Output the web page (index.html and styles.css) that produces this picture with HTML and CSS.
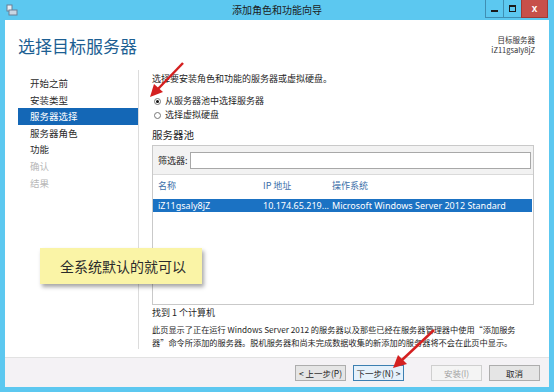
FILE: index.html
```html
<!DOCTYPE html>
<html lang="zh-CN">
<head>
    <meta charset="UTF-8">
    <title>添加角色和功能向导</title>
    <link rel="stylesheet" href="styles.css">
</head>
<body>
    <div class="window">
        <div class="titlebar">
            <svg class="app-icon" width="12" height="12" viewBox="0 0 12 12">
                <rect x="1" y="1" width="5" height="6" fill="#e8eef4" stroke="#6a7f95" stroke-width="1"/>
                <rect x="3" y="6" width="8" height="5" fill="#c9d6e3" stroke="#6a7f95" stroke-width="1"/>
            </svg>
            <span class="title">添加角色和功能向导</span>
            <div class="controls">
                <span class="ctl ctl-min"><i></i></span>
                <span class="ctl ctl-max"><i></i></span>
                <span class="ctl ctl-close">x</span>
            </div>
        </div>

        <div class="client">
            <div class="header">
                <h1>选择目标服务器</h1>
                <div class="target">
                    <div>目标服务器</div>
                    <div>iZ11gsaly8jZ</div>
                </div>
            </div>

            <div class="main">
                <ul class="steps">
                    <li>开始之前</li>
                    <li>安装类型</li>
                    <li class="active">服务器选择</li>
                    <li>服务器角色</li>
                    <li>功能</li>
                    <li class="disabled">确认</li>
                    <li class="disabled">结果</li>
                </ul>

                <div class="content">
                    <p class="intro">选择要安装角色和功能的服务器或虚拟硬盘。</p>
                    <label class="radio"><span class="dot checked"></span>从服务器池中选择服务器</label>
                    <label class="radio"><span class="dot"></span>选择虚拟硬盘</label>

                    <h2>服务器池</h2>
                    <div class="pool">
                        <div class="filter">
                            <span>筛选器:</span>
                            <div class="filter-input"></div>
                        </div>
                        <div class="row head">
                            <span class="c-name">名称</span>
                            <span class="c-ip">IP 地址</span>
                            <span class="c-os">操作系统</span>
                        </div>
                        <div class="row selected">
                            <span class="c-name">iZ11gsaly8jZ</span>
                            <span class="c-ip">10.174.65.219...</span>
                            <span class="c-os">Microsoft Windows Server 2012 Standard</span>
                        </div>
                    </div>
                    <p class="found">找到 1 个计算机</p>
                    <p class="desc">此页显示了正在运行 Windows Server 2012 的服务器以及那些已经在服务器管理器中使用“添加服务器”命令所添加的服务器。脱机服务器和尚未完成数据收集的新添加的服务器将不会在此页中显示。</p>
                </div>
            </div>

            <div class="footer">
                <button>&lt; 上一步(P)</button>
                <button class="focused">下一步(N) &gt;</button>
                <button class="gap" disabled>安装(I)</button>
                <button>取消</button>
            </div>

            <div class="note">全系统默认的就可以</div>
        </div>

        <svg class="arrow arrow-top" width="40" height="40" viewBox="0 0 40 40">
            <line x1="36" y1="3" x2="10" y2="30" stroke="#d42020" stroke-width="2.5"/>
            <polygon points="3,37 7,24 16,32" fill="#d42020"/>
        </svg>
        <svg class="arrow arrow-bottom" width="48" height="44" viewBox="0 0 48 44">
            <line x1="44" y1="3" x2="12" y2="33" stroke="#d42020" stroke-width="2.5"/>
            <polygon points="3,41 8,28 17,37" fill="#d42020"/>
        </svg>
    </div>
</body>
</html>
```

FILE: styles.css
```css
body {
    margin: 0;
    font-family: "Noto Sans CJK SC", "Noto Sans", sans-serif;
    color: #1e1e1e;
}
.window {
    position: relative;
    width: 554px;
    height: 392px;
    box-sizing: border-box;
    background: #5cc8f0;
    padding: 0 5px 5px;
    display: flex;
    flex-direction: column;
}
.titlebar {
    height: 20px;
    flex-shrink: 0;
    display: flex;
    align-items: center;
    position: relative;
}
.app-icon {
    margin-left: 1px;
}
.title {
    position: absolute;
    left: 0;
    right: 0;
    text-align: center;
    font-size: 10px;
    color: #1b1b1b;
    line-height: 20px;
}
.controls {
    margin-left: auto;
    display: flex;
    align-self: flex-start;
    margin-right: 1px;
}
.ctl {
    height: 18px;
    width: 19px;
    box-sizing: border-box;
    border: 1px solid #3f8fb3;
    border-top: none;
    display: flex;
    align-items: center;
    justify-content: center;
    margin-left: -1px;
}
.ctl-min i {
    display: block;
    width: 7px;
    height: 2px;
    background: #1b1b1b;
    margin-top: 4px;
}
.ctl-max i {
    display: block;
    width: 5px;
    height: 4px;
    border: 1px solid #1b1b1b;
    border-top-width: 2px;
}
.ctl-close {
    width: 27px;
    background: #c7504a;
    border-color: #a03a35;
    color: #fff;
    font-weight: bold;
    font-size: 10px;
    font-family: "Liberation Sans", sans-serif;
}
.client {
    flex: 1;
    min-height: 0;
    background: #fff;
    display: flex;
    flex-direction: column;
    position: relative;
}
.header {
    height: 50px;
    flex-shrink: 0;
    display: flex;
    align-items: flex-start;
    padding: 0 14px 0 13px;
}
.header h1 {
    margin: 15px 0 0;
    font-size: 17px;
    font-weight: normal;
    color: #1d5f93;
    line-height: 22px;
}
.target {
    margin-left: auto;
    margin-top: 15px;
    text-align: right;
    font-size: 7.5px;
    line-height: 10px;
    color: #333;
}
.main {
    flex: 1;
    display: flex;
    min-height: 0;
    overflow: hidden;
}
.steps {
    list-style: none;
    margin: 0;
    padding: 5px 0 0 13px;
    width: 120px;
    border-right: 1px solid #dcdcdc;
    margin-bottom: 8px;
}
.steps li {
    font-size: 9.5px;
    line-height: 16.6px;
    padding-left: 12px;
    color: #2b2b2b;
}
.steps li.active {
    background: #1467b6;
    color: #fff;
}
.steps li.disabled {
    color: #b8b8b8;
}
.content {
    flex: 1;
    padding: 0 15px 0 13px;
    font-size: 9px;
}
.intro {
    margin: 3px 0 9px;
    line-height: 12px;
}
.radio {
    display: flex;
    align-items: center;
    gap: 4px;
    line-height: 14px;
    margin-left: 2px;
}
.dot {
    width: 7px;
    height: 7px;
    border: 1px solid #777;
    border-radius: 50%;
    box-sizing: border-box;
    display: inline-block;
    position: relative;
}
.dot.checked::after {
    content: "";
    position: absolute;
    left: 1px;
    top: 1px;
    width: 3px;
    height: 3px;
    border-radius: 50%;
    background: #111;
}
h2 {
    font-size: 10.5px;
    font-weight: normal;
    margin: 6px 0 3px;
    line-height: 14px;
}
.pool {
    border: 1px solid #c9c9c9;
    height: 160px;
    box-sizing: border-box;
}
.filter {
    display: flex;
    align-items: center;
    height: 28px;
    padding: 0 2px 0 5px;
    background: #f2f2f2;
    border-bottom: 1px solid #dadada;
    gap: 2px;
}
.filter-input {
    flex: 1;
    height: 15px;
    border: 1px solid #a8a8a8;
    background: #fff;
}
.row {
    display: flex;
    height: 16px;
    align-items: center;
    padding-left: 5px;
}
.row.head {
    height: 20px;
    color: #3a6ea8;
    margin-bottom: 4px;
}
.row.selected {
    background: #1b72c3;
    color: #fff;
    height: 13px;
    font-family: "Noto Sans", sans-serif;
    margin-right: 1px;
}
.c-name {
    width: 105px;
}
.c-ip {
    width: 69px;
}
.found {
    margin: 2px 0 4px;
    line-height: 12px;
}
.desc {
    margin: 0;
    line-height: 13px;
    font-size: 8.2px;
    max-width: 370px;
}
.footer {
    height: 29px;
    flex-shrink: 0;
    background: #f4f2f5;
    border-top: 1px solid #e2e2e2;
    display: flex;
    align-items: center;
    justify-content: flex-end;
    padding-right: 9px;
    gap: 7px;
}
.footer button {
    width: 51px;
    height: 16px;
    padding: 0;
    font-family: inherit;
    font-size: 8.5px;
    background: #e5e5e5;
    border: 1px solid #adadad;
    color: #1e1e1e;
    line-height: 14px;
}
.footer button.focused {
    border-color: #3c7fb1;
    background: #e5f1fb;
}
.footer button:disabled {
    background: #f4f4f4;
    border-color: #cfcfcf;
    color: #a0a0a0;
}
.footer button.gap {
    margin-left: 20px;
}
.note {
    position: absolute;
    left: 35px;
    top: 228px;
    width: 162px;
    height: 36px;
    background: #faf4a6;
    box-shadow: 2px 3px 4px rgba(0, 0, 0, 0.35);
    font-size: 14px;
    line-height: 36px;
    padding-left: 20px;
    box-sizing: border-box;
    color: #2b2b2b;
}
.arrow {
    position: absolute;
}
.arrow-top {
    left: 147px;
    top: 60px;
}
.arrow-bottom {
    left: 390px;
    top: 327px;
}
```
